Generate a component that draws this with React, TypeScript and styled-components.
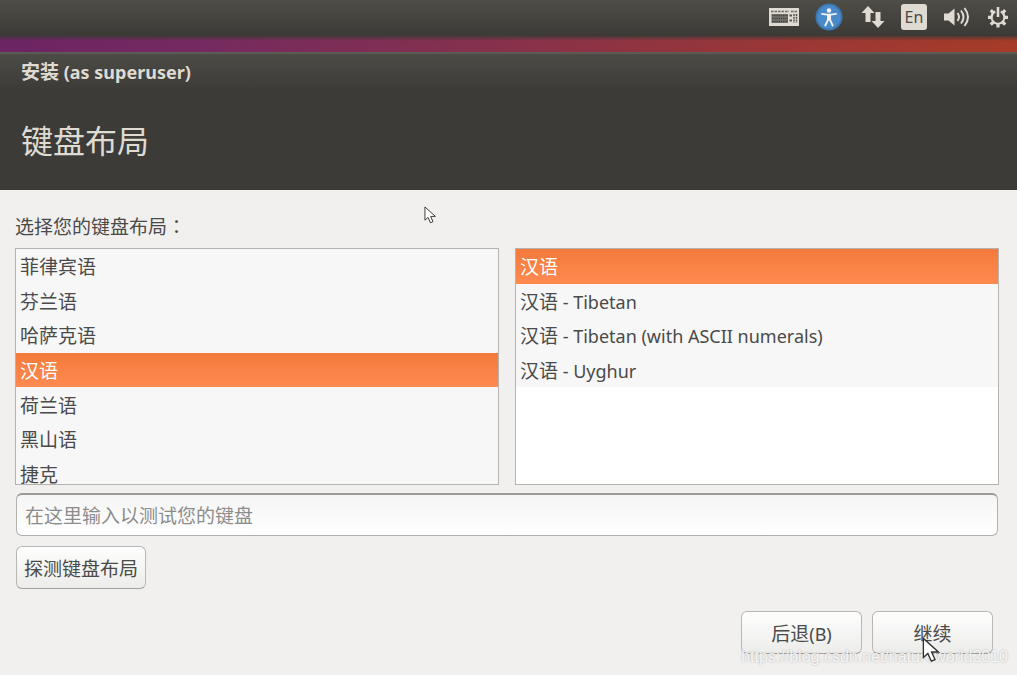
import React, { useState } from "react";
import styled, { createGlobalStyle, css } from "styled-components";

const GlobalStyle = createGlobalStyle`
  * { box-sizing: border-box; }
  body {
    margin: 0;
    background: #f1f0ee;
    color: #4a4a4a;
    font-family: "Noto Sans", "Noto Sans CJK SC", sans-serif;
    font-size: 19px;
    line-height: 28px;
  }
  button, input { font: inherit; color: inherit; }
`;

const Page = styled.div`
  position: relative;
  min-height: 100vh;
  overflow: hidden;
`;

const Panel = styled.header`
  display: flex;
  justify-content: flex-end;
  align-items: center;
  gap: 16px;
  height: 36px;
  padding: 0 8px 2px 0;
  background: linear-gradient(#4e4d48, #3b3a36);
`;

const Indicator = styled.button`
  display: flex;
  padding: 0;
  border: 0;
  background: none;
  color: #dfdbd2;
`;

const LanguageBadge = styled.span`
  width: 26px;
  height: 26px;
  border-radius: 3px;
  background: #dfdbd2;
  color: #4a4945;
  font-size: 16px;
  line-height: 26px;
  text-align: center;
`;

const Wallpaper = styled.div`
  height: 16px;
  background:
    linear-gradient(rgba(60, 58, 54, 0.8), rgba(60, 58, 54, 0) 5px),
    linear-gradient(90deg, #6c2463, #752a60 20%, #84304f 45%, #96363b 70%, #a63c28);
`;

const TitleArea = styled.div`
  height: 138px;
  padding: 4px 20px 0 21px;
  border-top: 2px solid #5b5a55;
  background: linear-gradient(#4c4b46, #3c3b37 36px);
  color: #dfdbd2;
`;

const WindowTitle = styled.div`
  font-size: 19px;
  font-weight: 700;
`;

const Heading = styled.h1`
  margin: 32px 0 0;
  font-size: 32px;
  font-weight: 400;
  line-height: 46px;
`;

const Latin = styled.span`
  font-size: 18px;
`;

const Form = styled.main`
  display: flex;
  flex-direction: column;
  padding: 22px 18px 20px 15px;
`;

const Prompt = styled.p`
  margin: 0 0 7px;
`;

const Colon = styled.span`
  font-family: "Noto Sans CJK TC", sans-serif;
`;

const Lists = styled.div`
  display: grid;
  grid-template-columns: 1fr 1fr;
  gap: 16px;
`;

const ListBox = styled.div`
  height: 237px;
  overflow: hidden;
  border: 1px solid #b5b3b0;
  background: #fff;
`;

const Rows = styled.div`
  display: grid;
  grid-template-rows: repeat(7, 1fr);
  height: 242px;
`;

const Row = styled.label<{ $selected: boolean }>`
  display: flex;
  align-items: center;
  padding: 2px 5px 0 4px;
  background: #f7f7f7;
  line-height: 24px;
  white-space: pre;
  ${(p) =>
    p.$selected &&
    css`
      background: linear-gradient(#f47a3c, #ff8a50);
      color: #fff;
    `}
`;

const Radio = styled.input`
  appearance: none;
  width: 0;
  height: 0;
  margin: 0;
  outline: 0;
`;

const TestField = styled.input`
  height: 43px;
  margin: 8px 1px 0;
  padding: 2px 8px 0;
  border: 1px solid #b3b1ae;
  border-top: 2px solid #9c9a97;
  border-radius: 6px;
  background: linear-gradient(#f5f5f5, #fff);
  outline: 0;
  &::placeholder { color: #8c8c8c; opacity: 1; }
`;

const Button = styled.button<{ $wide?: boolean }>`
  height: 43px;
  min-width: ${(p) => (p.$wide ? "121px" : "0")};
  padding: 2px 7px 0;
  border: 1px solid #b9b7b4;
  border-bottom-color: #a5a3a0;
  border-radius: 6px;
  background: linear-gradient(#fefefe, #ececea);
`;

const DetectRow = styled.div`
  display: flex;
  margin: 10px 1px 0;
`;

const Actions = styled.div`
  display: flex;
  justify-content: flex-end;
  gap: 10px;
  margin-top: 22px;
  padding-right: 6px;
`;

const Pointer = styled.svg<{ $x: number; $y: number }>`
  position: absolute;
  left: ${(p) => p.$x}px;
  top: ${(p) => p.$y}px;
  pointer-events: none;
`;

const Watermark = styled.div`
  position: absolute;
  right: 9px;
  top: 647px;
  color: rgba(255, 255, 255, 0.85);
  font-family: "Liberation Sans", sans-serif;
  font-size: 16px;
  line-height: 20px;
  text-shadow: 0 0 2px rgba(0, 0, 0, 0.3);
  pointer-events: none;
`;

const KeyboardIcon = () => (
  <svg width="30" height="20" viewBox="0 0 30 20">
    <rect x="0" y="1" width="30" height="18" fill="#dfdbd2" />
    <path d="M2 4.500h18M22 4.500h6" stroke="#6a6964" strokeWidth="1.500" strokeDasharray="2.500 1" />
    <rect x="2.500" y="7" width="16.500" height="9" fill="#77756f" />
    <path d="M3 8.500h16M3 11.500h16M3 14.500h16" stroke="#45443f" strokeWidth="1.600" strokeDasharray="1.400 .8" />
    <path d="M20.500 8.500h2.500M20.500 13.500h2.500" stroke="#55544f" strokeWidth="2" />
    <path d="M25 7v9M27.500 7v9" stroke="#55544f" strokeWidth="1.500" strokeDasharray="2 .8" />
  </svg>
);

const AccessIcon = () => (
  <svg width="30" height="28" viewBox="0 0 30 28">
    <circle cx="14" cy="14" r="13.500" fill="#3c78b4" />
    <circle cx="14" cy="14" r="11.500" fill="#4a8ac8" />
    <circle cx="14" cy="7.500" r="2.200" fill="#f2f2f0" />
    <path d="M7 10.800l5 .9h4l5-.9M12.900 12v5l-2.600 5.500M15.100 12v5l2.600 5.500" fill="none" stroke="#f2f2f0" strokeWidth="1.800" strokeLinecap="round" />
    <path d="M12 11h4v6.500h-4z" fill="#f2f2f0" />
  </svg>
);

const NetworkIcon = () => (
  <svg width="24" height="24" viewBox="0 0 24 24" fill="currentColor">
    <path d="M7 1l6.500 7H9.500v9h-5V8H.5z" />
    <path d="M17 23l6.500-7h-4V7h-5v9h-4z" />
  </svg>
);

const VolumeIcon = () => (
  <svg width="28" height="24" viewBox="0 0 28 24">
    <path d="M1 8.500h4.500l6-5v17l-6-5H1z" fill="currentColor" />
    <path d="M14.500 8q3 4 0 8M18 5.500q5 6.500 0 13M21.500 3q7 9 0 18" fill="none" stroke="currentColor" strokeWidth="2" />
  </svg>
);

const SystemIcon = () => (
  <svg width="22" height="22" viewBox="0 0 22 22" fill="none" stroke="currentColor">
    <path d="M8.200 5.600a6.400 6.400 0 1 0 5.600 0" strokeWidth="2.200" />
    <path d="M11 1v10" strokeWidth="2.600" />
    <path
      d="M1 11.400h3.500M17.500 11.400H21M11 18v3.500M3.800 4.200l2.600 2.600M18.200 4.200l-2.600 2.600M3.800 18.600l2.600-2.600M18.200 18.600l-2.600-2.600"
      strokeWidth="3.200"
    />
  </svg>
);

const Cursor = ({ x, y, height }: { x: number; y: number; height: number }) => (
  <Pointer $x={x} $y={y} width={(height * 13) / 19} height={height} viewBox="0 0 13 19">
    <path d="M1 1v14l3.300-3 2.500 5.700 2.700-1.200L7 11h5z" fill="#fff" stroke="#333" strokeWidth="1" />
  </Pointer>
);

const languages = ["菲律宾语", "芬兰语", "哈萨克语", "汉语", "荷兰语", "黑山语", "捷克"];
const variants = ["", " - Tibetan", " - Tibetan (with ASCII numerals)", " - Uyghur"];

export default function App() {
  const [language, setLanguage] = useState(3);
  const [variant, setVariant] = useState(0);

  return (
    <Page lang="zh-CN">
      <GlobalStyle />
      <Panel>
        <Indicator aria-label="Keyboard"><KeyboardIcon /></Indicator>
        <Indicator aria-label="Accessibility"><AccessIcon /></Indicator>
        <Indicator aria-label="Network"><NetworkIcon /></Indicator>
        <Indicator><LanguageBadge>En</LanguageBadge></Indicator>
        <Indicator aria-label="Volume"><VolumeIcon /></Indicator>
        <Indicator aria-label="System"><SystemIcon /></Indicator>
      </Panel>
      <Wallpaper />
      <TitleArea>
        <WindowTitle>安装<Latin> (as superuser)</Latin></WindowTitle>
        <Heading>键盘布局</Heading>
      </TitleArea>
      <Form>
        <Prompt>选择您的键盘布局<Colon lang="zh-TW">：</Colon></Prompt>
        <Lists>
          <ListBox role="radiogroup" aria-label="键盘布局">
            <Rows>
              {languages.map((name, i) => (
                <Row key={name} $selected={i === language}>
                  <Radio type="radio" name="language" checked={i === language} onChange={() => setLanguage(i)} />
                  {name}
                </Row>
              ))}
            </Rows>
          </ListBox>
          <ListBox role="radiogroup" aria-label="汉语">
            <Rows>
              {variants.map((name, i) => (
                <Row key={name} $selected={i === variant}>
                  <Radio type="radio" name="variant" checked={i === variant} onChange={() => setVariant(i)} />
                  汉语<Latin>{name}</Latin>
                </Row>
              ))}
            </Rows>
          </ListBox>
        </Lists>
        <TestField aria-label="在这里输入以测试您的键盘" placeholder="在这里输入以测试您的键盘" />
        <DetectRow>
          <Button type="button">探测键盘布局</Button>
        </DetectRow>
        <Actions>
          <Button type="button" $wide>后退<Latin>(B)</Latin></Button>
          <Button type="button" $wide>继续</Button>
        </Actions>
      </Form>
      <Watermark>https://blog.csdn.net/natureworld2010</Watermark>
      <Cursor x={424} y={206} height={18} />
      <Cursor x={922} y={637} height={26} />
    </Page>
  );
}
